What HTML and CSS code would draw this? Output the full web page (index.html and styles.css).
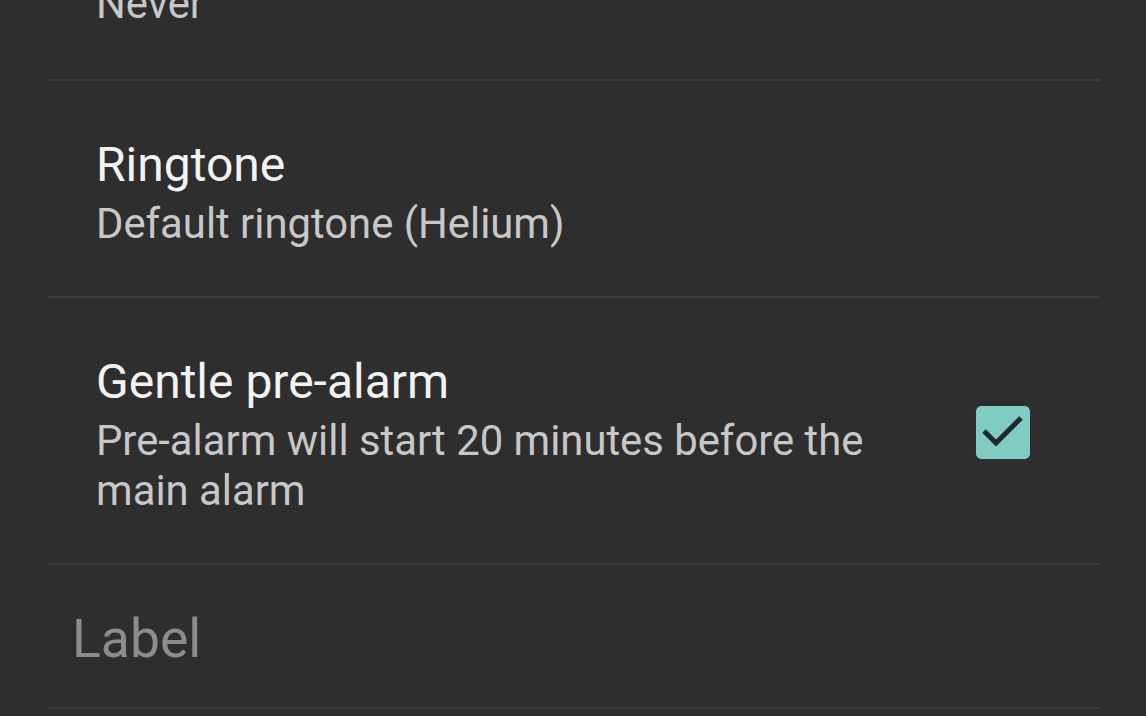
FILE: index.html
```html
<!DOCTYPE html>
<html>
<head>
<meta charset="utf-8">
<link rel="stylesheet" href="styles.css">
</head>
<body>
<div class="list">
  <div class="row row-cut">
    <div class="text">
      <div class="summary">Never</div>
    </div>
  </div>
  <div class="row">
    <div class="text">
      <div class="title">Ringtone</div>
      <div class="summary">Default ringtone (Helium)</div>
    </div>
  </div>
  <div class="row">
    <div class="text">
      <div class="title">Gentle pre-alarm</div>
      <div class="summary">Pre-alarm will start 20 minutes before the<br>main alarm</div>
    </div>
    <div class="checkbox">
      <svg width="56" height="55" viewBox="0 0 56 55">
        <rect x="0.5" y="0.5" width="55" height="54" rx="6" fill="#80cbc4" stroke="#25302f" stroke-width="1"/>
        <path d="M9 26 L21 38 L46 13" fill="none" stroke="#1f2b2b" stroke-width="5"/>
      </svg>
    </div>
  </div>
  <div class="row row-label">
    <div class="label">Label</div>
  </div>
</div>
</body>
</html>
```

FILE: styles.css
```css
html, body {
  margin: 0;
  padding: 0;
  background: #2e2e2e;
  overflow: hidden;
}
body {
  width: 1146px;
  height: 716px;
  font-family: Roboto, "Noto Sans", sans-serif;
}
.list {
  margin: 0 46px 0 48px;
}
.row {
  display: flex;
  align-items: center;
  padding: 50px 69px 47px 48px;
  border-bottom: 2px solid #3e3e3e;
}
.row-cut {
  margin-top: -21px;
  padding-top: 0;
  padding-bottom: 50px;
}
.text {
  flex: 1;
}
.title {
  font-size: 48px;
  line-height: 68px;
  color: #f2f2f2;
}
.summary {
  font-size: 41.8px;
  line-height: 50px;
  color: #c8c8c8;
}
.checkbox {
  width: 56px;
  height: 55px;
  display: flex;
}
.row-label {
  height: 144px;
  box-sizing: border-box;
  padding: 4px 0 0 24px;
}
.label {
  font-size: 53.5px;
  color: #8d8d8d;
}
```
